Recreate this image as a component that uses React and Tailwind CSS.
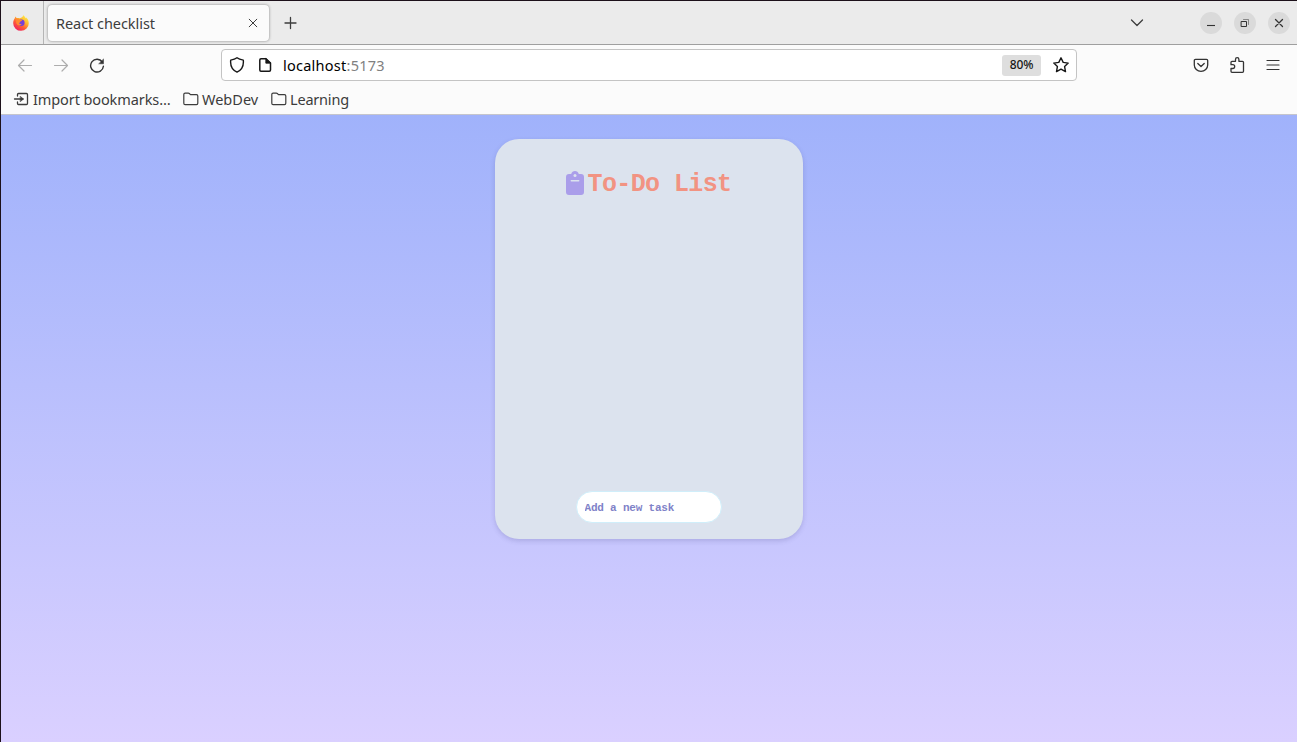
import React from "react";

function Icon({ children, className = "", size = 16, sw = 1.25 }) {
  return (
    <svg
      width={size}
      height={size}
      viewBox="0 0 16 16"
      fill="none"
      stroke="currentColor"
      strokeWidth={sw}
      strokeLinecap="round"
      strokeLinejoin="round"
      className={`shrink-0 ${className}`}
    >
      {children}
    </svg>
  );
}

function FirefoxLogo() {
  return (
    <svg width="16" height="16" viewBox="0 0 16 16" className="shrink-0">
      <defs>
        <linearGradient id="flame" x1="0.85" y1="0.05" x2="0.2" y2="0.95">
          <stop offset="0" stopColor="#fff04a" />
          <stop offset="0.35" stopColor="#ffb52e" />
          <stop offset="0.65" stopColor="#ff5a36" />
          <stop offset="1" stopColor="#ee1f63" />
        </linearGradient>
      </defs>
      <path
        d="M10.2 0.2c1.5 1 2 2 2.1 3 .5-.2.6-.6.6-1 1.8 1.4 2.900 3.600 2.900 6A7.800 7.600 0 0 1 .2 8.300C.2 6.200.8 4.500 1.800 3.300c.2-.9.5-1.500 1-1.900.1.7.4 1.200.9 1.600 1-.2 2-.1 2.800.2C7.500 2.900 9.700 2.500 10.200.2z"
        fill="url(#flame)"
      />
      <circle cx="8.300" cy="7.700" r="3.300" fill="#7540d8" />
      <path d="M3.600 4.200c1.400-.5 2.600-.3 3.600.7l2 .1c-.2.900-1 1.200-1.900 1.500 0 1-.8 1.400-1.600 1.600.8.9 1.900 1.100 3 .7-.6 1.600-3 2.300-4.500.7C3 8.200 2.800 6 3.600 4.200z" fill="#ff8a31" />
    </svg>
  );
}

function Folder() {
  return (
    <Icon sw={1.2}>
      <path d="M.8 12.300V3.400c0-.8.500-1.300 1.300-1.300h3.200c.4 0 .7.100 1 .4l1.200 1.200h6c.8 0 1.300.5 1.300 1.300v7.300c0 .8-.5 1.300-1.300 1.300H2.100c-.8 0-1.300-.5-1.300-1.300z" />
    </Icon>
  );
}

function WindowButton({ children }) {
  return (
    <div className="flex h-[22px] w-[22px] items-center justify-center rounded-full bg-[#dadada] text-[#333333]">
      {children}
    </div>
  );
}

function TabStrip() {
  return (
    <div className="flex h-11 shrink-0 items-center border-b border-[#9f9f9f] bg-[#ebebeb] text-[#3d3d3d]">
      <div className="flex h-full w-[43px] items-center justify-center border-r border-[#b5b5b5] pr-[2px]">
        <FirefoxLogo />
      </div>
      <div className="ml-1 flex h-9 w-[221px] items-center justify-between rounded bg-[#fbfbfb] pr-2 pl-2 shadow-[0_0_3px_rgba(0,0,0,0.45)]">
        <span className="text-[14.5px] leading-5 tracking-[-0.05px]">React checklist</span>
        <Icon sw={1}>
          <path d="M4.200 4.200l7.600 7.600M11.800 4.200l-7.600 7.600" />
        </Icon>
      </div>
      <Icon className="ml-[14px]" sw={1.3}>
        <path d="M7.500 2.500v11M2 8h11" />
      </Icon>
      <div className="ml-auto flex items-center pr-[7px]">
        <Icon className="mr-[55px]" sw={1.3}>
          <path d="M2.500 5L8 10.500L13.500 5" />
        </Icon>
        <div className="flex gap-3">
          <WindowButton>
            <Icon sw={1.1}>
              <path d="M4 10.500h8" strokeLinecap="butt" />
            </Icon>
          </WindowButton>
          <WindowButton>
            <Icon sw={1}>
              <path d="M4.500 6.500h5v5h-5z" />
              <path d="M6.500 4.500h5v5" opacity=".5" />
            </Icon>
          </WindowButton>
          <WindowButton>
            <Icon sw={1.3}>
              <path d="M4.500 4.500l7 7M11.500 4.500l-7 7" />
            </Icon>
          </WindowButton>
        </div>
      </div>
    </div>
  );
}

function Toolbar() {
  return (
    <div className="flex h-10 shrink-0 items-center pl-4 text-[#333333]">
      <div className="flex w-[204px] gap-5">
        <Icon className="text-[#adadad]" sw={1.2}>
          <path d="M14.500 8.500H1.800M7 3L1.500 8.500L7 14" />
        </Icon>
        <Icon className="text-[#adadad]" sw={1.2}>
          <path d="M1.500 8.500h12.700M9 3L14.500 8.500L9 14" />
        </Icon>
        <Icon sw={1.4}>
          <path d="M13.300 5A6.400 6.400 0 1 0 14.400 9.200" />
          <path d="M14.500 2.300v4.500H10z" fill="currentColor" strokeWidth=".5" />
        </Icon>
      </div>
      <div className="flex h-8 w-[856px] items-center rounded border border-[#c4c4c4] bg-white pr-[7px] pl-[7px] text-[#171717]">
        <Icon sw={1.4}>
          <path d="M8 .8c2 1.600 4.200 2 6.300 2.300.5 4.900-1.100 9.600-6.300 12-5.200-2.400-6.800-7.100-6.300-12C3.800 2.800 6 2.400 8 .8z" />
        </Icon>
        <Icon className="ml-3" sw={1.5}>
          <path d="M4 1.800h5L13.500 6v7c0 .8-.5 1.200-1.200 1.200H4c-.8 0-1.200-.4-1.200-1.200V3c0-.8.400-1.200 1.200-1.200z" />
          <path d="M8.800 1.800V6.200h4.700z" fill="currentColor" strokeWidth=".8" />
        </Icon>
        <span className="ml-[10px] text-[14.5px] leading-5 tracking-[0.25px] text-black">
          localhost<span className="text-[#808080]">:5173</span>
        </span>
        <span className="mr-3 ml-auto flex h-[21px] w-[39px] items-center justify-center rounded-[3px] bg-[#dedede] text-[12px] font-medium tracking-[-0.1px]">
          80%
        </span>
        <Icon sw={1.4}>
          <path d="M8 .8l2.200 4.600 5 .7-3.600 3.500.9 5L8 12.200l-4.500 2.400.9-5L.8 6.100l5-.7z" />
        </Icon>
      </div>
      <div className="ml-auto flex gap-5 pr-4">
        <Icon sw={1.3}>
          <path d="M2.500 2.300h11c.7 0 1.200.5 1.200 1.200V8a6.700 6.400 0 0 1-13.400 0V3.500c0-.7.500-1.200 1.200-1.200z" />
          <path d="M4.800 6.500L8 9.500l3.200-3" />
        </Icon>
        <Icon sw={1.3}>
          <path d="M2 7.500V5.300c0-.6.400-1 1-1h3.500V2.400a1.700 1.700 0 0 1 3.400 0v1.900h3.600c.6 0 1 .4 1 1v9c0 .6-.4 1-1 1H3c-.6 0-1-.4-1-1v-2.800h1.800a1.800 1.800 0 0 0 0-3.800H2" />
        </Icon>
        <Icon sw={1.2}>
          <path d="M2 3.500h12M2 8h12M2 12.500h12" />
        </Icon>
      </div>
    </div>
  );
}

function Bookmarks() {
  return (
    <div className="flex h-[29px] shrink-0 items-center pb-px pl-3 text-[14.5px] leading-5 text-[#3c3c3c]">
      <div className="flex w-[170px] items-center gap-1">
        <Icon sw={1.3}>
          <path d="M4.500 5V3.500c0-.6.400-1 1-1h7.900c.7 0 1.100.4 1.100 1v9c0 .6-.4 1-1.100 1H5.500c-.6 0-1-.4-1-1V11M1.500 8H10" />
          <path d="M7.500 5.500L10.500 8l-3 2.500z" fill="currentColor" strokeWidth=".6" />
        </Icon>
        <span className="tracking-[-0.1px] whitespace-nowrap">Import bookmarks…</span>
      </div>
      <div className="flex w-[88px] items-center gap-[3px]">
        <Folder />
        <span>WebDev</span>
      </div>
      <div className="flex items-center gap-[3px]">
        <Folder />
        <span className="tracking-[-0.2px]">Learning</span>
      </div>
    </div>
  );
}

function TodoCard() {
  return (
    <main className="flex h-[400px] w-[308px] flex-col items-center justify-between rounded-[24px] bg-[#dce3ee] pt-[30px] pb-4 font-['Liberation_Mono',monospace] font-bold shadow-[0_2px_5px_rgba(60,60,120,0.2)]">
      <h1 className="flex h-7 items-center pl-px text-[25px] tracking-[-0.6px] text-[#f29382]">
        <svg width="18" height="24" viewBox="0 0 18 24" className="mr-[3px] shrink-0">
          <path
            d="M3 3h2.200C5.700 1.200 7.200 0 9 0s3.300 1.200 3.800 3H15a3 3 0 0 1 3 3v15a3 3 0 0 1-3 3H3a3 3 0 0 1-3-3V6a3 3 0 0 1 3-3z"
            fill="#aa9eea"
          />
          <circle cx="9" cy="4.500" r="1.500" fill="#dce3ee" />
          <path d="M5.300 9.800h7.400" stroke="#dce3ee" strokeWidth="1.500" strokeLinecap="round" />
        </svg>
        <span className="pt-[3px]">To-Do List</span>
      </h1>
      <input
        type="text"
        placeholder="Add a new task"
        className="h-8 w-[146px] rounded-full border border-[#d0eefa] bg-white px-2 pt-[2px] text-[11px] tracking-[-0.2px] outline-none placeholder:text-[#7f82c8] placeholder:opacity-100"
      />
    </main>
  );
}

export default function App() {
  return (
    <div className="flex h-screen w-screen flex-col overflow-hidden border-t border-l border-[#1c101a] bg-[#fbfbfb] font-['Noto_Sans',sans-serif]">
      <TabStrip />
      <Toolbar />
      <Bookmarks />
      <div className="flex flex-1 justify-center border-t border-[#c5c5cc] bg-linear-to-b from-[#a0b2fb] to-[#dad0ff] pt-6 pr-px">
        <TodoCard />
      </div>
    </div>
  );
}
